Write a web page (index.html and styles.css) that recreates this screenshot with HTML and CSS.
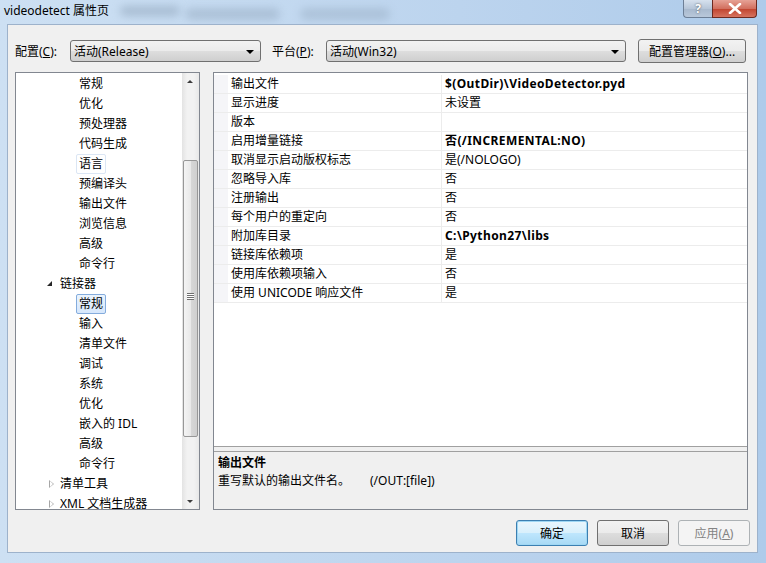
FILE: index.html
```html
<!DOCTYPE html>
<html>
<head>
<meta charset="utf-8">
<link rel="stylesheet" href="styles.css">
</head>
<body>
<div class="window">
  <div class="titlebar">
    <div class="blur b1"></div>
    <div class="blur b2"></div>
    <div class="blur b3"></div>
    <div class="title">videodetect 属性页</div>
    <div class="caption-buttons">
      <div class="cb help">?</div>
      <div class="cb close">
        <svg width="14" height="11" viewBox="0 0 14 11"><path d="M2 1 L12 10 M12 1 L2 10" stroke="#fff" stroke-width="2.6" stroke-linecap="round"/></svg>
      </div>
    </div>
  </div>
  <div class="frame">
    <div class="client">
      <div class="config-row">
        <span class="label lab-config">配置(<u>C</u>):</span>
        <div class="combo combo-config"><span>活动(Release)</span><i class="arrow"></i></div>
        <span class="label lab-platform">平台(<u>P</u>):</span>
        <div class="combo combo-platform"><span>活动(Win32)</span><i class="arrow"></i></div>
        <div class="btn btn-manager">配置管理器(<u>O</u>)...</div>
      </div>
      <div class="main">
        <div class="tree">
          <div class="tree-list">
            <div class="node child">常规</div>
            <div class="node child">优化</div>
            <div class="node child">预处理器</div>
            <div class="node child">代码生成</div>
            <div class="node child"><span class="focus">语言</span></div>
            <div class="node child">预编译头</div>
            <div class="node child">输出文件</div>
            <div class="node child">浏览信息</div>
            <div class="node child">高级</div>
            <div class="node child">命令行</div>
            <div class="node parent"><i class="tri open"></i>链接器</div>
            <div class="node child"><span class="selected">常规</span></div>
            <div class="node child">输入</div>
            <div class="node child">清单文件</div>
            <div class="node child">调试</div>
            <div class="node child">系统</div>
            <div class="node child">优化</div>
            <div class="node child">嵌入的 IDL</div>
            <div class="node child">高级</div>
            <div class="node child">命令行</div>
            <div class="node parent"><i class="tri closed"></i>清单工具</div>
            <div class="node parent"><i class="tri closed"></i>XML 文档生成器</div>
          </div>
          <div class="vscroll">
            <div class="sb-arrow up"></div>
            <div class="sb-track">
              <div class="sb-thumb"><div class="grip"></div></div>
            </div>
            <div class="sb-arrow down"></div>
          </div>
        </div>
        <div class="grid">
          <div class="props">
            <div class="row"><div class="name">输出文件</div><div class="value bold">$(OutDir)\VideoDetector.pyd</div></div>
            <div class="row"><div class="name">显示进度</div><div class="value">未设置</div></div>
            <div class="row"><div class="name">版本</div><div class="value"></div></div>
            <div class="row"><div class="name">启用增量链接</div><div class="value bold">否(/INCREMENTAL:NO)</div></div>
            <div class="row"><div class="name">取消显示启动版权标志</div><div class="value">是(/NOLOGO)</div></div>
            <div class="row"><div class="name">忽略导入库</div><div class="value">否</div></div>
            <div class="row"><div class="name">注册输出</div><div class="value">否</div></div>
            <div class="row"><div class="name">每个用户的重定向</div><div class="value">否</div></div>
            <div class="row"><div class="name">附加库目录</div><div class="value bold">C:\Python27\libs</div></div>
            <div class="row"><div class="name">链接库依赖项</div><div class="value">是</div></div>
            <div class="row"><div class="name">使用库依赖项输入</div><div class="value">否</div></div>
            <div class="row"><div class="name">使用 UNICODE 响应文件</div><div class="value">是</div></div>
          </div>
          <div class="desc">
            <div class="desc-title">输出文件</div>
            <div class="desc-text"><span class="desc-main">重写默认的输出文件名。</span><span>(/OUT:[file])</span></div>
          </div>
        </div>
      </div>
      <div class="buttons">
        <div class="btn dlg default">确定</div>
        <div class="btn dlg">取消</div>
        <div class="btn dlg disabled">应用(<u>A</u>)</div>
      </div>
    </div>
  </div>
</div>
</body>
</html>
```

FILE: styles.css
```css
html, body {
  margin: 0;
  padding: 0;
}
body {
  width: 766px;
  height: 563px;
  overflow: hidden;
  font-family: "Noto Sans", "Noto Sans CJK SC", sans-serif;
  font-size: 12px;
  color: #000;
}
.window {
  width: 766px;
  height: 563px;
  display: flex;
  flex-direction: column;
  background: linear-gradient(90deg, #cde0f3 0%, #bcd4ee 60%, #aecbea 100%);
}
.titlebar {
  height: 24px;
  flex: none;
  position: relative;
  overflow: hidden;
}
.blur {
  position: absolute;
  border-radius: 6px;
  filter: blur(4px);
  background: #8ea3b9;
  opacity: 0.55;
}
.b1 { left: 120px; top: 6px; width: 60px; height: 10px; }
.b2 { left: 185px; top: 8px; width: 95px; height: 12px; opacity: 0.45; }
.b3 { left: 300px; top: 8px; width: 90px; height: 12px; opacity: 0.4; }
.title {
  position: relative;
  padding: 3px 0 0 4px;
  line-height: 16px;
  font-size: 12px;
}
.caption-buttons {
  position: absolute;
  right: 9px;
  top: 0;
  display: flex;
}
.cb {
  height: 18px;
  box-sizing: border-box;
  border: 1px solid #6d7f96;
  border-top: none;
  display: flex;
  align-items: center;
  justify-content: center;
}
.help {
  width: 29px;
  border-radius: 0 0 0 4px;
  background: linear-gradient(#d6e1ee, #b7c6d8 50%, #a7b8cd 51%, #b9c8da);
  color: #fff;
  font-weight: bold;
  font-size: 12px;
  text-shadow: 0 0 2px #444;
  border-right: none;
}
.close {
  width: 45px;
  border-radius: 0 0 4px 0;
  background: linear-gradient(#e6a296, #d2705f 50%, #c0432e 51%, #d6735f);
  border-color: #6d2a20;
}
.frame {
  flex: 1;
  padding: 0 8px 10px 7px;
  display: flex;
}
.client {
  flex: 1;
  background: #f0f0f0;
  border: 1px solid #9db2cb;
  display: flex;
  flex-direction: column;
  padding: 14px 0 0 7px;
}
.config-row {
  height: 24px;
  display: flex;
  align-items: center;
}
.label {
  white-space: nowrap;
}
.lab-config { width: 55px; }
.lab-platform { margin-left: 11px; width: 54px; }
.combo {
  height: 22px;
  box-sizing: border-box;
  border: 1px solid #707070;
  border-radius: 3px;
  background: linear-gradient(#f2f2f2 0%, #ebebeb 48%, #dddddd 52%, #cfcfcf 100%);
  display: flex;
  align-items: center;
  padding-left: 3px;
  position: relative;
}
.combo-config { width: 191px; }
.combo-platform { width: 300px; }
.arrow {
  position: absolute;
  right: 6px;
  top: 9px;
  width: 0;
  height: 0;
  border-left: 4px solid transparent;
  border-right: 4px solid transparent;
  border-top: 4px solid #000;
}
.btn {
  box-sizing: border-box;
  border: 1px solid #707070;
  border-radius: 3px;
  background: linear-gradient(#f2f2f2 0%, #ebebeb 48%, #dddddd 52%, #cfcfcf 100%);
  display: flex;
  align-items: center;
  justify-content: center;
  white-space: nowrap;
}
.btn-manager {
  margin-left: 12px;
  width: 108px;
  height: 24px;
}
.main {
  margin-top: 9px;
  height: 438px;
  display: flex;
}
.tree {
  width: 185px;
  height: 438px;
  box-sizing: border-box;
  border: 1px solid #828790;
  background: #fff;
  display: flex;
  overflow: hidden;
}
.tree-list {
  flex: 1;
  overflow: hidden;
  padding-top: 1px;
}
.node {
  height: 20px;
  line-height: 20px;
  white-space: nowrap;
  position: relative;
}
.child { padding-left: 63px; }
.parent { padding-left: 44px; }
.node span {
  display: inline-block;
  height: 18px;
  line-height: 18px;
  padding: 0 2px;
  margin-left: -3px;
  border: 1px solid transparent;
  border-radius: 2px;
}
.node .focus {
  border-color: #dbe6f4;
}
.node .selected {
  border-color: #84acdd;
  background: linear-gradient(#ebf4fd, #d6e7fc);
}
.tri {
  position: absolute;
  width: 0;
  height: 0;
}
.tri.open {
  left: 31px;
  top: 7px;
  border-left: 5px solid transparent;
  border-bottom: 5px solid #262626;
}
.tri.closed {
  left: 33px;
  top: 6px;
  border-top: 4px solid transparent;
  border-bottom: 4px solid transparent;
  border-left: 5px solid #a6a6a6;
}
.tri.closed::after {
  content: "";
  position: absolute;
  left: -4px;
  top: -3px;
  border-top: 3px solid transparent;
  border-bottom: 3px solid transparent;
  border-left: 3px solid #fff;
}
.vscroll {
  width: 17px;
  flex: none;
  display: flex;
  flex-direction: column;
  background: linear-gradient(90deg, #e3e3e3, #f2f2f2 30%, #f2f2f2 70%, #e8e8e8);
}
.sb-arrow {
  height: 17px;
  flex: none;
  position: relative;
}
.sb-arrow::after {
  content: "";
  position: absolute;
  left: 5px;
  width: 0;
  height: 0;
  border-left: 3px solid transparent;
  border-right: 3px solid transparent;
}
.sb-arrow.up::after {
  top: 7px;
  border-bottom: 3px solid #3c3c3c;
}
.sb-arrow.down::after {
  top: 8px;
  border-top: 3px solid #3c3c3c;
}
.sb-track {
  flex: 1;
  padding-top: 70px;
}
.sb-thumb {
  height: 277px;
  margin: 0 1px;
  box-sizing: border-box;
  border: 1px solid #979797;
  border-radius: 2px;
  background: linear-gradient(90deg, #f4f4f4, #e9e9e9 50%, #d7d7d7 51%, #cfcfcf);
  position: relative;
}
.grip {
  position: absolute;
  left: 3px;
  top: 132px;
  width: 7px;
  height: 7px;
  background: repeating-linear-gradient(#6f6f6f 0 1px, #fff 1px 2px);
}
.grid {
  margin-left: 13px;
  width: 535px;
  height: 438px;
  box-sizing: border-box;
  border: 1px solid #828790;
  display: flex;
  flex-direction: column;
  background: #f0f0f0;
}
.props {
  height: 374px;
  box-sizing: border-box;
  padding-top: 2px;
  background: #fff;
  border-bottom: 1px solid #a0a0a0;
  flex: none;
}
.row {
  display: flex;
  height: 19px;
  box-sizing: border-box;
  border-bottom: 1px solid #ececec;
  margin-left: 0;
}
.name {
  width: 228px;
  box-sizing: border-box;
  padding-left: 17px;
  line-height: 18px;
  border-right: 1px solid #ececec;
  white-space: nowrap;
  background: linear-gradient(90deg, #f5f5f8 0 14px, #fff 14px);
}
.value {
  padding-left: 3px;
  line-height: 18px;
  white-space: nowrap;
}
.bold { font-weight: bold; letter-spacing: 0.4px; }
.desc {
  flex: 1;
  margin-top: 4px;
  border-top: 1px solid #a0a0a0;
  padding: 2px 0 0 4px;
}
.desc-title {
  font-weight: bold;
  line-height: 18px;
}
.desc-text {
  line-height: 18px;
  white-space: nowrap;
}
.desc-main {
  display: inline-block;
  width: 152px;
}
.buttons {
  margin-top: 10px;
  height: 26px;
  display: flex;
  justify-content: flex-end;
  gap: 9px;
  padding-right: 7px;
}
.dlg {
  width: 72px;
  height: 26px;
}
.default {
  border-color: #3c7fb1;
  background: linear-gradient(#eaf6fd 0%, #d9f0fc 48%, #bee6fd 52%, #a7d9f5 100%);
  box-shadow: inset 0 0 0 1px #9fd7f4;
}
.disabled {
  border-color: #adb2b5;
  background: #f4f4f4;
  color: #838383;
}
```
